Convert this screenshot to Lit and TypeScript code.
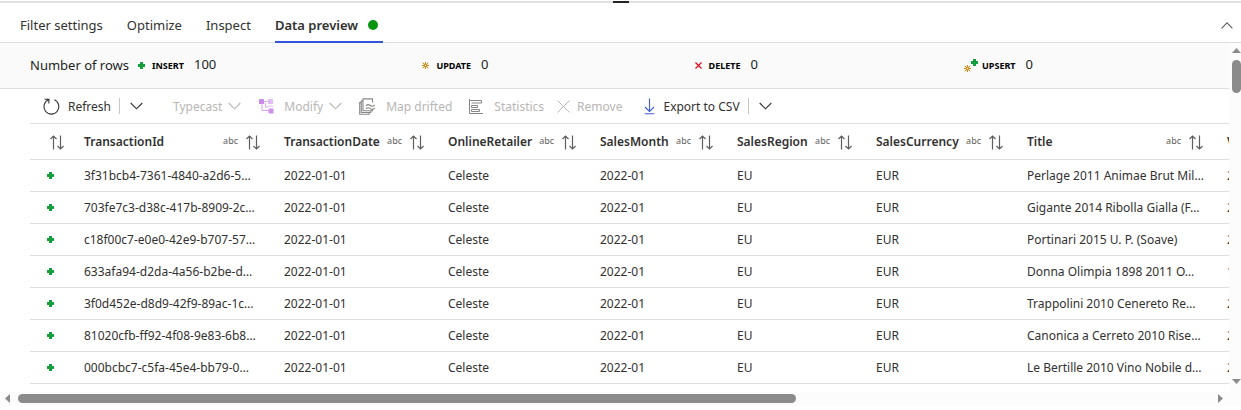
import { LitElement, html, css, svg } from "lit";
import { customElement } from "lit/decorators.js";

interface Column {
  name: string;
  width: number;
}

const columns: Column[] = [
  { name: "TransactionId", width: 200 },
  { name: "TransactionDate", width: 164 },
  { name: "OnlineRetailer", width: 152 },
  { name: "SalesMonth", width: 137 },
  { name: "SalesRegion", width: 139 },
  { name: "SalesCurrency", width: 151 },
  { name: "Title", width: 200 },
  { name: "Vintage", width: 140 },
];

const records: [string, string, string][] = [
  ["3f31bcb4-7361-4840-a2d6-5…", "Perlage 2011 Animae Brut Mil…", "2011"],
  ["703fe7c3-d38c-417b-8909-2c…", "Gigante 2014 Ribolla Gialla (F…", "2014"],
  ["c18f00c7-e0e0-42e9-b707-57…", "Portinari 2015 U. P. (Soave)", "2015"],
  ["633afa94-d2da-4a56-b2be-d…", "Donna Olimpia 1898 2011 O…", "1898"],
  ["3f0d452e-d8d9-42f9-89ac-1c…", "Trappolini 2010 Cenereto Re…", "2010"],
  ["81020cfb-ff92-4f08-9e83-6b8…", "Canonica a Cerreto 2010 Rise…", "2010"],
  ["000bcbc7-c5fa-45e4-bb79-0…", "Le Bertille 2010 Vino Nobile d…", "2010"],
];

const plus = html`<svg width="7" height="7" viewBox="0 0 7 7" aria-hidden="true">
  <path d="M2 0h3v2h2v3H5v2H2V5H0V2h2z" fill="#13a03c" />
</svg>`;

const starShape = svg`<g stroke="#c98a10" stroke-width="1" fill="none">
  <path d="M3.5 0v2M3.5 5v2M0 3.5h2M5 3.5h2M.7.7l1.6 1.6M4.700 4.700l1.600 1.600M6.300.7L4.700 2.300M2.300 4.700L.7 6.300" />
  <rect x="2.300" y="2.300" width="2.400" height="2.400" />
</g>`;

const star = html`<svg width="7" height="7" viewBox="0 0 7 7" aria-hidden="true">${starShape}</svg>`;

const cross = html`<svg width="7" height="7" viewBox="0 0 7 7" aria-hidden="true">
  <path d="M.5.5l6 6M6.5.5l-6 6" stroke="#e00b1c" stroke-width="1.2" fill="none" />
</svg>`;

const upsertIcon = html`<svg width="14" height="13" viewBox="0 0 14 13" aria-hidden="true">
  <g transform="translate(0 6)">${starShape}</g>
  <path d="M9 0h3v2h2v3h-2v2H9V5H7V2h2z" fill="#13a03c" />
</svg>`;

const chevron = html`<svg class="chevron" width="13" height="8" viewBox="0 0 13 8" aria-hidden="true">
  <path d="M.7 1l5.8 5.8L12.3 1" fill="none" stroke="currentColor" stroke-width="1.1" />
</svg>`;

const sortIcon = html`<svg class="sort" width="14" height="15" viewBox="0 0 14 15" aria-hidden="true">
  <path d="M3.500 14.500V1M.5 4l3-3 3 3M10.500.5V14M7.500 11l3 3 3-3" fill="none" stroke="#605e5c" stroke-width="1.2" />
</svg>`;

const refreshIcon = html`<svg width="17" height="17" viewBox="0 0 17 17" aria-hidden="true">
  <path d="M5.4 1.8A7.500 7.500 0 1 0 11.400 1.800M1.600 1.200h4.300v4.300" fill="none" stroke="#323130" stroke-width="1.1" />
</svg>`;

const modifyIcon = html`<svg width="15" height="15" viewBox="0 0 15 15" aria-hidden="true">
  <path d="M4 2.500h6M3 4v7.500h7M6.500 4v4h3" fill="none" stroke="#d9a6f0" stroke-width="1" />
  <rect x="0" y="0" width="5" height="5" rx=".5" fill="#c98be6" />
  <rect x="9" y="0" width="5" height="5" rx=".5" fill="#e2bdf5" />
  <rect x="9.500" y="9.500" width="5" height="5" rx=".5" fill="#cf92ea" />
  <rect x="9" y="6.400" width="5" height="1.600" fill="#ecd5f8" />
</svg>`;

const mapIcon = html`<svg width="17" height="17" viewBox="0 0 17 17" aria-hidden="true">
  <g fill="none" stroke="#8a8886" stroke-width="1.1">
    <path d="M13.500 4.500V.9H4v11.800h9.500v-1.500" />
    <path d="M4 2.900H2.300v11.600h9.500v-1.800M2.300 4.600H.7v11.600h9.400v-1.700" />
    <path d="M7 7.800c1.500-1.700 2.800-1.500 4.400-.3s2.900 1 4.300-.7M7 10.900c1.500-1.700 2.800-1.500 4.400-.3s2.900 1 4.300-.7" />
  </g>
</svg>`;

const statsIcon = html`<svg width="15" height="15" viewBox="0 0 15 15" aria-hidden="true">
  <path d="M.5 0v14.500H14M.5 1.500h12v2.500H2.500M2.500 6.500h6v2H2.500zM2.500 10.500h8v2h-8z" fill="none" stroke="#8a8886" stroke-width="1" />
</svg>`;

const removeIcon = html`<svg width="13" height="13" viewBox="0 0 13 13" aria-hidden="true">
  <path d="M.5.5l12 12M12.500.5l-12 12" stroke="currentColor" stroke-width="1" fill="none" />
</svg>`;

const exportIcon = html`<svg width="11" height="17" viewBox="0 0 11 17" aria-hidden="true">
  <path d="M5.500.5v12.700M1 9l4.500 4.500L10 9M.8 15.800h9.400" stroke="#3b5bdb" stroke-width="1.1" fill="none" />
</svg>`;

@customElement("app-root")
export class AppRoot extends LitElement {
  static styles = css`
    :host {
      display: block;
      overflow: hidden;
      background: #fff;
      color: #323130;
      font: 13px/18px "Noto Sans", "Open Sans", sans-serif;
      --line: #dedede;
    }
    svg { display: block; flex: none; overflow: visible; }
    button {
      display: flex;
      align-items: center;
      padding: 0;
      border: 0;
      background: none;
      color: inherit;
      font: inherit;
      white-space: nowrap;
    }
    .splitter {
      display: flex;
      justify-content: center;
      margin-top: 1px;
      height: 2px;
      background: #e1e1e1;
    }
    .grip { width: 16px; background: #252423; }
    .tabs {
      display: flex;
      align-items: stretch;
      gap: 24px;
      height: 39px;
      padding: 0 8px 0 20px;
      border-bottom: 1px solid var(--line);
    }
    .tab { padding-top: 4px; margin-bottom: -1px; }
    .tab.active {
      gap: 10px;
      padding-right: 5px;
      border-bottom: 2px solid #3455db;
      padding-top: 6px;
      font-weight: 600;
    }
    .status { width: 10px; height: 10px; border-radius: 50%; background: #0b9410; }
    .collapse { margin-left: auto; color: #605e5c; padding-top: 6px; }
    .body { display: flex; }
    .pane { flex: 1; min-width: 0; overflow: hidden; }
    .summary {
      display: flex;
      align-items: center;
      height: 45px;
      padding-left: 30px;
      gap: 9px;
      background: #fafafa;
      border-bottom: 1px solid var(--line);
      color: #201f1e;
    }
    .caption { padding-bottom: 2px; }
    .counts {
      display: flex;
      flex: 1;
      justify-content: space-between;
      margin: 0;
      padding-right: 196px;
    }
    .count { display: flex; align-items: center; }
    .kind { display: flex; align-items: center; gap: 7px; color: #000; font-weight: 700; font-size: 9px; }
    .kind.tight { gap: 4px; }
    .value { margin: 0 0 4px 10px; }
    .toolbar {
      display: flex;
      align-items: center;
      height: 34px;
      padding-left: 43px;
      font-size: 12px;
    }
    .tool { gap: 8px; }
    .tool:disabled { color: #b8b6b4; }
    .label { padding-top: 1px; }
    .divider { width: 1px; height: 16px; margin: 0 10px 0 8px; background: #c8c6c4; }
    .typecast { gap: 6px; margin-left: 30px; }
    .modify { gap: 10px; margin-left: 18px; }
    .modify .chevron { margin-left: -4px; }
    .map { gap: 10px; margin-left: 17px; }
    .stats { gap: 10px; margin-left: 17px; }
    .remove { gap: 7px; margin-left: 13px; }
    .export { margin-left: 22px; }
    .grid { margin-left: 30px; padding-bottom: 7px; overflow: hidden; }
    table {
      width: 1329px;
      border-collapse: separate;
      border-spacing: 0;
      table-layout: fixed;
      font-size: 12px;
      border-top: 1px solid var(--line);
    }
    .mark { width: 46px; }
    th, td { padding: 0 8px; text-align: left; border-bottom: 1px solid var(--line); }
    th { height: 35px; font-weight: 600; }
    td { height: 31px; white-space: nowrap; }
    .mark-cell { padding-left: 17px; }
    th.mark-cell { padding-left: 20px; }
    .head { display: flex; align-items: center; padding-right: 8px; }
    .sort { margin-top: 2px; }
    .type { margin-left: auto; padding: 0 8px 2px 7px; font-weight: 400; font-size: 9px; color: #605e5c; }
    .name { white-space: nowrap; }
    .track { display: flex; align-items: center; background: #fcfcfc; }
    .vertical { flex-direction: column; width: 12px; padding: 5px 0 7px; overflow: hidden; align-items: flex-end; gap: 7px; }
    .horizontal { height: 15px; padding: 0 18px 0 5px; gap: 8px; }
    .thumb { background: #8b8b8b; border-radius: 5px; }
    .vertical .thumb { width: 9px; height: 33px; margin-bottom: auto; }
    .room { flex: 1; }
    .horizontal .thumb { width: 65.3%; height: 9px; }
  `;

  private renderCount(icon: unknown, label: string, value: number, tight = false) {
    return html`<div class="count">
      <dt class="kind ${tight ? "tight" : ""}">${icon}${label}</dt>
      <dd class="value">${value}</dd>
    </div>`;
  }

  private renderHead(column: Column) {
    return html`<th scope="col">
      <div class="head">
        <span class="name">${column.name}</span><span class="type">abc</span>${sortIcon}
      </div>
    </th>`;
  }

  render() {
    return html`
      <div class="splitter"><span class="grip"></span></div>
      <nav class="tabs">
        <button class="tab">Filter settings</button>
        <button class="tab">Optimize</button>
        <button class="tab">Inspect</button>
        <button class="tab active">Data preview<span class="status"></span></button>
        <button class="collapse" aria-label="Collapse">
          <svg width="12" height="7" viewBox="0 0 12 7" aria-hidden="true">
            <path d="M.6 6.300L6 .9l5.400 5.400" fill="none" stroke="currentColor" stroke-width="1.1" />
          </svg>
        </button>
      </nav>
      <div class="body">
        <main class="pane">
          <section class="summary">
            <span class="caption">Number of rows</span>
            <dl class="counts">
              ${this.renderCount(plus, "INSERT", 100)}
              ${this.renderCount(star, "UPDATE", 0)}
              ${this.renderCount(cross, "DELETE", 0)}
              ${this.renderCount(upsertIcon, "UPSERT", 0, true)}
            </dl>
          </section>
          <div class="toolbar">
            <button class="tool">${refreshIcon}<span class="label">Refresh</span></button>
            <span class="divider"></span>
            <button aria-label="Refresh options">${chevron}</button>
            <button class="tool typecast" disabled><span class="label">Typecast</span>${chevron}</button>
            <button class="tool modify" disabled>${modifyIcon}<span class="label">Modify</span>${chevron}</button>
            <button class="tool map" disabled>${mapIcon}<span class="label">Map drifted</span></button>
            <button class="tool stats" disabled>${statsIcon}<span class="label">Statistics</span></button>
            <button class="tool remove" disabled>${removeIcon}<span class="label">Remove</span></button>
            <button class="tool export">${exportIcon}<span class="label">Export to CSV</span></button>
            <span class="divider"></span>
            <button aria-label="Export options">${chevron}</button>
          </div>
          <div class="grid">
            <table>
              <colgroup>
                <col class="mark" />
                ${columns.map((c) => html`<col style="width:${c.width}px" />`)}
              </colgroup>
              <thead>
                <tr>
                  <th class="mark-cell" scope="col">${sortIcon}</th>
                  ${columns.map((c) => this.renderHead(c))}
                </tr>
              </thead>
              <tbody>
                ${records.map(
                  ([id, title, vintage]) => html`<tr>
                    <td class="mark-cell">${plus}</td>
                    ${[id, "2022-01-01", "Celeste", "2022-01", "EU", "EUR", title, vintage].map(
                      (value) => html`<td>${value}</td>`
                    )}
                  </tr>`
                )}
              </tbody>
            </table>
          </div>
        </main>
        <div class="track vertical">
          <svg width="9" height="5" viewBox="0 0 9 5" aria-hidden="true"><path d="M4.500 0L9 5H0z" fill="#8b8b8b" /></svg>
          <span class="thumb"></span>
          <svg width="9" height="5" viewBox="0 0 9 5" aria-hidden="true"><path d="M0 0h9L4.500 5z" fill="#8b8b8b" /></svg>
        </div>
      </div>
      <div class="track horizontal">
        <svg width="5" height="9" viewBox="0 0 5 9" aria-hidden="true"><path d="M5 0v9L0 4.500z" fill="#8b8b8b" /></svg>
        <div class="room"><div class="thumb"></div></div>
        <svg width="5" height="9" viewBox="0 0 5 9" aria-hidden="true"><path d="M0 0v9l5-4.500z" fill="#8b8b8b" /></svg>
      </div>
    `;
  }
}
